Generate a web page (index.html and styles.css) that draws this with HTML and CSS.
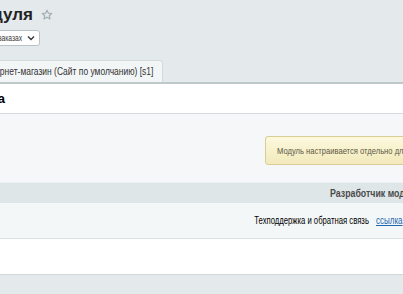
FILE: index.html
```html
<!DOCTYPE html>
<html lang="ru">
<head>
    <meta charset="UTF-8">
    <meta name="viewport" content="width=device-width, initial-scale=1.0">
    <title>Настройки модуля</title>
    <link rel="stylesheet" href="styles.css">
</head>
<body>
    <div class="head">
        <div class="title-row">
            <div class="clip title-clip">
                <h1>Настройки модуля</h1>
            </div>
            <svg class="star" width="12" height="12" viewBox="0 0 12 12">
                <path d="M6 1.2l1.4 3 3.3.3-2.5 2.2.8 3.2L6 8.2 3 9.9l.8-3.2L1.3 4.5l3.3-.3z" fill="none" stroke="#a3aeb3" stroke-width="1.2" stroke-linejoin="round"/>
            </svg>
        </div>

        <div class="clip select-clip">
            <div class="select">
                <span class="sq sq-r">Показывать в заказах</span>
                <svg width="8" height="6" viewBox="0 0 8 6"><path d="M1 1.5l3 3 3-3" fill="none" stroke="#333" stroke-width="1.3"/></svg>
            </div>
        </div>

        <div class="clip tab-clip">
            <div class="tab"><span class="sq sq-r">Интернет-магазин (Сайт по умолчанию) [s1]</span></div>
        </div>
    </div>

    <div class="content">
        <div class="section-row">
            <div class="clip section-clip"><b>Основная настройка</b></div>
        </div>

        <div class="note-area">
            <div class="note"><span class="sq">Модуль настраивается отдельно для каждого сайта</span></div>
        </div>

        <div class="group-head"><span class="sq">Разработчик модуля</span></div>

        <div class="field-row">
            <div class="cell-l"><span class="sq sq-r">Техподдержка и обратная связь</span></div>
            <div class="cell-r"><a href="#" class="sq">ссылка</a></div>
        </div>

        <div class="empty-row"></div>
    </div>
</body>
</html>
```

FILE: styles.css
```css
body {
    margin: 0;
    background: #e4eaec;
    font-family: "Liberation Sans", Arial, sans-serif;
    color: #333;
    overflow: hidden;
}
/* the admin font is narrow, squeeze the text a bit */
.sq {
    display: inline-block;
    transform: scaleX(.8);
    transform-origin: left center;
}
.sq-r {
    transform-origin: right center;
}
.clip {
    display: flex;
    justify-content: flex-end;
    white-space: nowrap;
}
.head {
    padding-top: 5px;
}
.title-row {
    display: flex;
    align-items: center;
    height: 20px;
}
.title-clip {
    width: 33px;
}
h1 {
    margin: 0;
    font-size: 17px;
    line-height: 20px;
    color: #222;
}
.star {
    margin-left: 8px;
}
.select-clip {
    width: 40px;
    margin-top: 5px;
}
.select {
    display: flex;
    align-items: center;
    gap: 5px;
    height: 14px;
    padding: 0 4px 0 6px;
    background: #fff;
    border: 1px solid #b9c3c7;
    border-radius: 3px;
    font-size: 9px;
}
.select .sq {
    transform: scaleX(.74);
}
.tab-clip {
    width: 163px;
    margin-top: 14px;
}
.tab {
    height: 21px;
    line-height: 20px;
    padding: 0 9px;
    background: #f3f6f7;
    border: 1px solid #d3dbde;
    border-bottom: none;
    border-radius: 3px 3px 0 0;
    font-size: 11px;
}
.tab .sq {
    transform: scaleX(.77);
}
.content {
    border-top: 2px solid #bfc8cb;
}
.section-row {
    height: 29px;
    display: flex;
    align-items: center;
    background: #fff;
    border-bottom: 1px solid #d3dbde;
}
.section-clip {
    width: 5px;
    font-size: 13px;
    color: #000;
}
.note-area {
    padding: 22px 0 17px 265px;
    background: #f5f7f8;
    white-space: nowrap;
}
.note {
    display: inline-block;
    height: 27px;
    line-height: 27px;
    padding: 0 11px;
    border: 1px solid #d8cd94;
    border-radius: 3px;
    background: linear-gradient(#fcf8de, #f2eabb);
    font-size: 9.5px;
    color: #5c5742;
}
.group-head {
    height: 20px;
    line-height: 20px;
    padding-left: 330px;
    background: #dfe6e8;
    border-top: 1px solid #edf1f2;
    font-size: 11px;
    font-weight: bold;
    color: #4b4b4b;
    white-space: nowrap;
}
.field-row {
    display: flex;
    align-items: center;
    height: 35px;
    background: #f4f7f8;
    border-bottom: 1px solid #dbe2e4;
    font-size: 10px;
    color: #000;
    white-space: nowrap;
}
.cell-l {
    flex-shrink: 0;
    width: 369px;
    text-align: right;
}
.cell-l .sq {
    transform: scaleX(.77);
}
.cell-r {
    flex-shrink: 0;
    padding-left: 7px;
}
.cell-r a {
    color: #2067b0;
    text-decoration: underline;
}
.empty-row {
    height: 35px;
    background: #fff;
    border-bottom: 1px solid #cfd7da;
}
```
